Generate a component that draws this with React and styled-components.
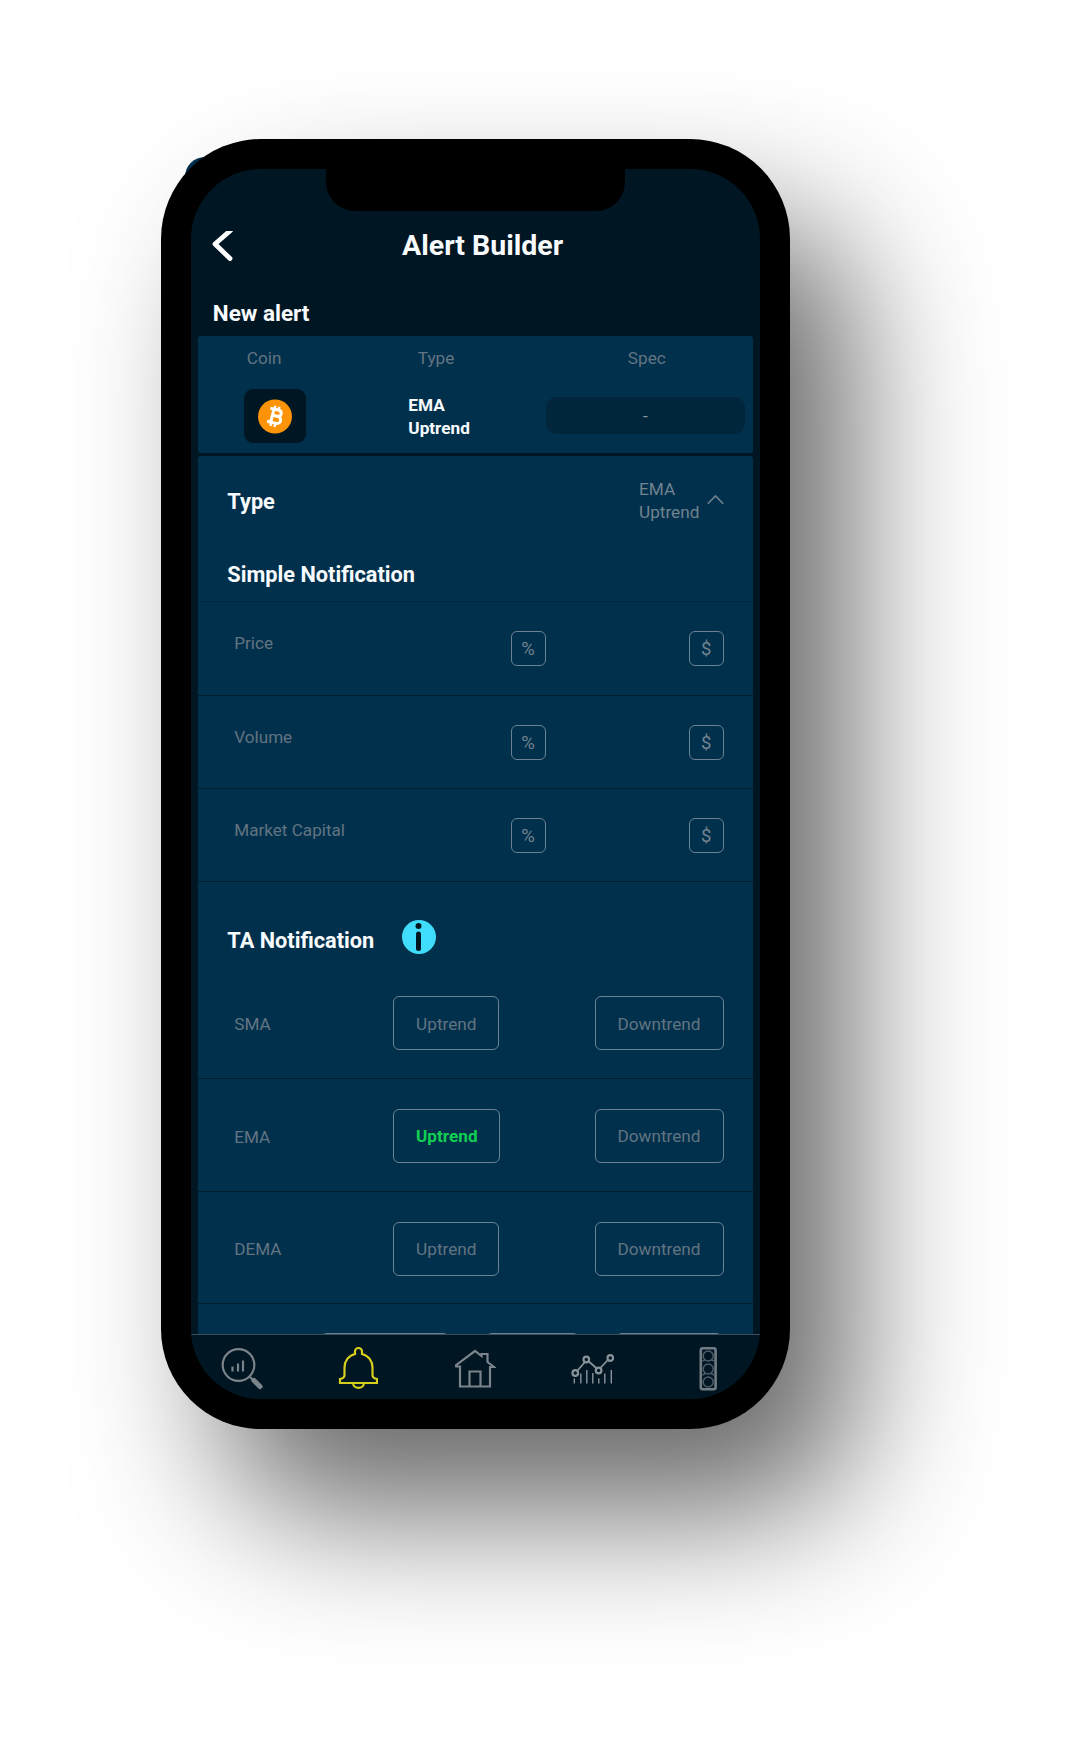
import React from "react";
import styled, { createGlobalStyle, css } from "styled-components";

const c = {
  night: "#011623",
  panel: "#01304c",
  line: "#011c2e",
  muted: "#617482",
  edge: "#6c8290",
  text: "#f8fbfd",
};

const Global = createGlobalStyle`
  * { box-sizing: border-box; }
  html, body { margin: 0; background: #fff; }
  body { font-family: Roboto, "Liberation Sans", sans-serif; overflow: hidden; }
  button { font: inherit; background: none; padding: 0; color: inherit; }
`;

const Page = styled.main`
  width: 1077px;
  height: 1737px;
  padding: 139.4px 0 0 160.5px;
  isolation: isolate;
`;

const Phone = styled.div`
  position: relative;
  width: 629.8px;
  height: 1290px;
  padding: 30px;
  border-radius: 100px;
  background: #000;
  box-shadow: 63px 84px 142px rgba(0, 0, 0, 0.59);
  &::before {
    content: "";
    position: absolute;
    z-index: -1;
    left: 24px;
    top: 18px;
    width: 60px;
    height: 60px;
    border-radius: 20px;
    background: ${c.panel};
  }
`;

const Notch = styled.div`
  position: absolute;
  top: 20px;
  left: 165.3px;
  width: 299.7px;
  height: 52px;
  border-radius: 0 0 29px 29px;
  background: #000;
`;

const Screen = styled.div`
  display: flex;
  flex-direction: column;
  height: 1230px;
  border-radius: 70px;
  overflow: hidden;
  background: ${c.night};
  color: ${c.text};
`;

const Header = styled.header`
  display: grid;
  grid-template-columns: 190px 1fr 197px;
  align-items: center;
  height: 62px;
  margin-top: 45.4px;
  padding-left: 21.5px;
`;

const Title = styled.h1`
  margin: 0;
  text-align: center;
  font-size: 28.5px;
  line-height: 32px;
  font-weight: 700;
  white-space: nowrap;
`;

const Section = styled.h2`
  margin: 0;
  font-size: 21.75px;
  line-height: 26px;
  font-weight: 700;
  white-space: nowrap;
`;

const NewAlert = styled(Section)`
  margin: 23.2px 0 10.3px 22.3px;
  font-size: 22.5px;
`;

const card = css`
  margin: 0 7.8px;
  background: ${c.panel};
  border-radius: 3px;
`;

const Summary = styled.section`
  ${card}
  height: 116.7px;
  flex: none;
  display: grid;
  grid-template-columns: 140px 204px 1fr;
`;

const Field = styled.div`
  display: flex;
  flex-direction: column;
  padding-left: ${(p) => p.$inset}px;
`;

const Label = styled.span`
  font-size: 17.2px;
  line-height: 23.4px;
  color: ${c.muted};
  padding-left: ${(p) => p.$inset || 0}px;
  height: 53px;
  padding-top: 11px;
`;

const Coin = styled.div`
  display: grid;
  place-items: center;
  width: 62.5px;
  height: 53.5px;
  border-radius: 9px;
  background: ${c.night};
`;

const Picked = styled.strong`
  font-size: 17.2px;
  line-height: 23.4px;
  font-weight: 700;
  padding-top: 4.5px;
`;

const SpecBox = styled.div`
  width: 199px;
  height: 37px;
  margin-top: 8px;
  border-radius: 11px;
  background: #01253b;
  color: #8799a4;
  font-size: 17.2px;
  line-height: 38.5px;
  text-align: center;
`;

const Builder = styled.section`
  ${card}
  flex: none;
  height: 877.8px;
  margin-top: 3px;
  border-radius: 3px 3px 0 0;
  overflow: hidden;
`;

const TypeRow = styled.div`
  display: flex;
  align-items: center;
  justify-content: space-between;
  height: 91px;
  padding: 1px 29px 0;
`;

const TypeValue = styled.div`
  display: flex;
  align-items: center;
  justify-content: space-between;
  width: 85px;
  margin: -2px -0.5px 0 0;
  font-size: 17.2px;
  line-height: 23.4px;
  color: #71838f;
`;

const SimpleHead = styled.div`
  height: 55.5px;
  padding: 15px 29px 0;
  border-bottom: 1px solid #012842;
`;

const TaHead = styled.div`
  display: flex;
  align-items: center;
  gap: 28px;
  height: 84.5px;
  padding: 26px 29px 0;
  ${Section} {
    padding-top: 7.5px;
  }
`;

const MetricRow = styled.div`
  display: grid;
  grid-template-columns: 276.3px 178px 35px;
  height: 93.2px;
  padding: 29px 0 0 36px;
  border-bottom: 1.5px solid ${c.line};
`;

const Name = styled.span`
  font-size: 17.1px;
  line-height: 24px;
  color: ${c.muted};
  white-space: nowrap;
`;

const Unit = styled.button`
  width: 35px;
  height: 35px;
  border: 1.3px solid ${c.edge};
  border-radius: 6px;
  font-size: 18.5px;
  line-height: 35px;
  color: #71838f;
`;

const TrendRow = styled.div`
  display: grid;
  grid-template-columns: 159px 1fr auto;
  align-items: center;
  height: 112.6px;
  padding: 2px 29px 0 36px;
  border-bottom: 1.5px solid ${c.line};
  ${Name} {
    padding-top: 1.2px;
  }
`;

const Trend = styled.button`
  width: ${(p) => (p.$wide ? 129 : p.$on ? 107 : 106)}px;
  height: 54px;
  padding-top: 1px;
  border: 1.3px solid ${c.edge};
  border-radius: 6px;
  font-size: 17.2px;
  font-weight: ${(p) => (p.$on ? 700 : 400)};
  color: ${(p) => (p.$on ? "#10cf51" : c.muted)};
`;

const NextRow = styled.div`
  display: flex;
  gap: 37px;
  padding: 28.4px 0 0 123px;
`;

const Edge = styled.div`
  width: ${(p) => p.$w}px;
  height: 20px;
  border-top: 1.5px solid ${c.edge};
  border-radius: 6px;
`;

const Tabs = styled.nav`
  flex: 1;
  display: grid;
  grid-template-columns: repeat(5, 58px);
  column-gap: 58.6px;
  justify-items: center;
  align-items: start;
  padding: 12.6px 0 0 22.3px;
  background: ${c.night};
  border-top: 1.3px solid #3b4e5c;
`;

const Icon = styled.svg`
  display: block;
  flex: none;
  fill: none;
  stroke: ${(p) => p.$color || "#7b848b"};
  stroke-width: 2.2;
`;

const Bitcoin = () => (
  <Icon width="35" height="35" viewBox="0 0 35 35" $color="#fff">
    <circle cx="17" cy="17.5" r="17" fill="#fd9307" stroke="none" />
    <g transform="rotate(14 17.5 17.5)" strokeWidth="3">
      <path d="M10.5 10.6h8.1c5 0 5 6.300 0 6.300H14m5 0c6 0 6 7.200 0 7.200H10.500M14.200 10.600v13.500" />
      <path d="M14.800 7v4M19 7v4M14.800 24v4M19 24v4" strokeWidth="2.300" />
    </g>
  </Icon>
);

const metrics = ["Price", "Volume", "Market Capital"];
const trends = ["SMA", "EMA", "DEMA"];

export default function App() {
  return (
    <Page>
      <Global />
      <Phone>
        <Screen>
          <Header>
            <Icon width="22" height="30" viewBox="0 0 22 30">
              <path d="M18.500 -0.500L3 13l15 14.500" stroke="#fff" strokeWidth="4.800" strokeLinejoin="round" strokeLinecap="round" />
            </Icon>
            <Title>Alert Builder</Title>
          </Header>
          <NewAlert>New alert</NewAlert>
          <Summary>
            <Field $inset={45.5}>
              <Label $inset={3}>Coin</Label>
              <Coin><Bitcoin /></Coin>
            </Field>
            <Field $inset={70}>
              <Label $inset={9.5}>Type</Label>
              <Picked>EMA<br />Uptrend</Picked>
            </Field>
            <Field $inset={3.5}>
              <Label $inset={82}>Spec</Label>
              <SpecBox>-</SpecBox>
            </Field>
          </Summary>
          <Builder>
            <TypeRow>
              <Section>Type</Section>
              <TypeValue>
                <span>EMA<br />Uptrend</span>
                <Icon width="17" height="13" viewBox="0 0 17 13" $color="#71838f">
                  <path d="M.8 9.800L8.500 2l7.700 7.800" strokeWidth="1.600" />
                </Icon>
              </TypeValue>
            </TypeRow>
            <SimpleHead><Section>Simple Notification</Section></SimpleHead>
            {metrics.map((m) => (
              <MetricRow key={m}>
                <Name>{m}</Name>
                <Unit>%</Unit>
                <Unit>$</Unit>
              </MetricRow>
            ))}
            <TaHead>
              <Section>TA Notification</Section>
              <Icon width="34" height="34" viewBox="0 0 34 34">
                <circle cx="17" cy="17" r="17" fill="#40dcfc" stroke="none" />
                <circle cx="16.500" cy="6" r="3" fill={c.night} stroke="none" />
                <path d="M16.500 14v14.500" stroke={c.night} strokeWidth="5" strokeLinecap="round" />
              </Icon>
            </TaHead>
            {trends.map((t) => (
              <TrendRow key={t}>
                <Name>{t}</Name>
                <Trend $on={t === "EMA"}>Uptrend</Trend>
                <Trend $wide>Downtrend</Trend>
              </TrendRow>
            ))}
            <NextRow><Edge $w={128} /><Edge $w={93} /><Edge $w={106} /></NextRow>
          </Builder>
          <Tabs>
            <Icon width="44" height="44" viewBox="0 0 44 44">
              <circle cx="18.500" cy="18" r="15.800" />
              <path d="M12.500 24.500v-5M18 24.500v-8M23 24.500v-11" />
              <path d="M29.500 29.500l4 4" />
              <path d="M34 33.500l6 6" strokeWidth="5" strokeLinecap="round" />
            </Icon>
            <Icon width="40" height="44" viewBox="0 0 40 44" $color="#d6cf1c">
              <path d="M17 7V4.500a3.500 3.500 0 0 1 7 0V7c6.500 1.500 10.500 7 10.500 13.500v7.500c0 2 1.500 3.500 4.500 4v4H2v-4c3-.5 4.500-2 4.500-4v-7.500C6.500 14 10.500 8.500 17 7z" />
              <path d="M15 36c.5 6.500 10.500 6.500 11 0" />
            </Icon>
            <Icon width="42" height="44" viewBox="0 0 42 44">
              <path d="M6 39.500V19.500H2.200L2 18.200L21 4l6.500 5V7h6v8l6.500 5h-4v19.500zM15.500 39.500V24.500h11v15" />
            </Icon>
            <Icon width="44" height="44" viewBox="-0.800 0 44 44" $color="#8a9399">
              <path d="M6.300 24l7.400-8.500M17.500 14l8.500 7.500M29.500 21l8-8.500" strokeWidth="1.700" />
              <circle cx="4.500" cy="26" r="2.800" /><circle cx="15.500" cy="12.500" r="2.800" />
              <circle cx="27.800" cy="23.500" r="2.800" /><circle cx="39.500" cy="11" r="2.800" />
              <path d="M3.500 36.500v-5M10 36.500v-10M16 36.500V23M22 36.500V26M28 36.500v-5M34 36.500V26.500M40.500 36.500V23" strokeWidth="1.400" />
            </Icon>
            <Icon width="18" height="44" viewBox="0 0 18 44" $color="#707c84">
              <rect x="1.800" y="1.300" width="14.800" height="41" rx="2" strokeWidth="2.600" />
              <g stroke="#4d5c67" strokeWidth="1.500">
                <circle cx="9.200" cy="9" r="5" />
                <circle cx="9.200" cy="22" r="5" />
                <circle cx="9.200" cy="35" r="5" />
                <path d="M3.500 14l3-1.500M15 14l-3-1.500M3.500 28l3-1.500M15 28l-3-1.500" />
              </g>
            </Icon>
          </Tabs>
        </Screen>
        <Notch />
      </Phone>
    </Page>
  );
}
